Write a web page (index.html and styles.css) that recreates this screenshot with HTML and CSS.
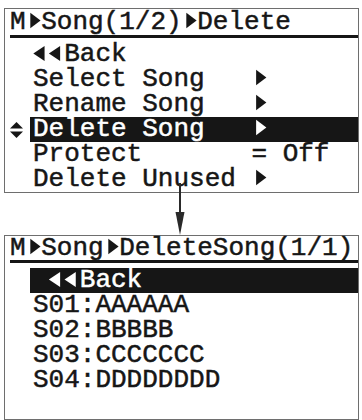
FILE: index.html
```html
<!DOCTYPE html>
<html lang="en">
<head>
<meta charset="utf-8">
<title>Delete Song</title>
<link rel="stylesheet" href="styles.css">
</head>
<body>
<div class="screen">
  <section class="panel panel-top">
    <div class="title">M<span class="tri tri-r"></span>Song(1/2)<span class="tri tri-r"></span>Delete</div>
    <ul class="menu">
      <li class="row"><span class="mark"></span><span class="txt"><span class="tri tri-l"></span><span class="tri tri-l"></span>Back</span></li>
      <li class="row"><span class="mark"></span><span class="txt"><span class="lbl">Select Song</span><span class="tri tri-r"></span></span></li>
      <li class="row"><span class="mark"></span><span class="txt"><span class="lbl">Rename Song</span><span class="tri tri-r"></span></span></li>
      <li class="row sel"><span class="mark"><svg class="updown" width="13" height="16" viewBox="0 0 13 16"><polygon points="6.5,0 13,6.5 0,6.5"/><polygon points="0,9.5 13,9.5 6.5,16"/></svg></span><span class="txt"><span class="lbl">Delete Song</span><span class="tri tri-r"></span></span></li>
      <li class="row"><span class="mark"></span><span class="txt"><span class="lbl">Protect</span><span class="val">= Off</span></span></li>
      <li class="row"><span class="mark"></span><span class="txt"><span class="lbl">Delete Unused</span><span class="tri tri-r"></span></span></li>
    </ul>
  </section>
  <div class="connector">
    <svg class="arrow" width="20" height="52" viewBox="0 0 20 52"><line x1="10" y1="0" x2="10" y2="32" stroke="#2a2a2a" stroke-width="2"/><polygon points="5.5,29 14.5,29 10,52" fill="#2a2a2a"/></svg>
  </div>
  <section class="panel panel-bottom">
    <div class="title">M<span class="tri tri-r"></span>Song<span class="tri tri-r"></span>DeleteSong(1/1)</div>
    <ul class="menu">
      <li class="row sel"><span class="mark"></span><span class="txt"><span class="pad"></span><span class="tri tri-l"></span><span class="tri tri-l"></span>Back</span></li>
      <li class="row"><span class="mark"></span><span class="txt">S01:AAAAAA</span></li>
      <li class="row"><span class="mark"></span><span class="txt">S02:BBBBB</span></li>
      <li class="row"><span class="mark"></span><span class="txt">S03:CCCCCCC</span></li>
      <li class="row"><span class="mark"></span><span class="txt">S04:DDDDDDDD</span></li>
    </ul>
  </section>
</div>
</body>
</html>
```

FILE: styles.css
```css
* {
  box-sizing: border-box;
  margin: 0;
  padding: 0;
}

html,
body {
  background: #ffffff;
}

body {
  width: 362px;
  height: 420px;
  overflow: hidden;
  font-family: "Liberation Mono", "DejaVu Sans Mono", monospace;
  font-size: 26px;
  color: #161616;
  -webkit-text-stroke: 0.5px currentColor;
}

.screen {
  display: flex;
  flex-direction: column;
  padding: 8px 3px 0 4px;
}

.panel {
  border: 1px solid #6e6e6e;
  padding-left: 5px;
}

.panel-top {
  height: 185px;
}

.panel-bottom {
  height: 185px;
}

.title {
  height: 29px;
  line-height: 26px;
  border-bottom: 3px solid #161616;
  white-space: pre;
}

.panel-top .menu {
  margin-top: 4px;
}

.panel-bottom .title {
  height: 27px;
  line-height: 24px;
}

.menu {
  list-style: none;
  margin-top: 5px;
}

.row {
  display: flex;
  height: 25px;
  line-height: 25px;
}

.mark {
  flex: none;
  width: 20px;
  display: flex;
  align-items: center;
}

.txt {
  flex: 1;
  padding-left: 3px;
  white-space: pre;
}

.lbl {
  display: inline-block;
  width: 14ch;
}

.val {
  display: inline-block;
}

.pad {
  display: inline-block;
  width: 1ch;
}

.sel .txt {
  background: #161616;
  color: #ffffff;
}

.updown {
  display: block;
  fill: #161616;
}

.tri {
  display: inline-block;
  width: 1ch;
  height: 17px;
  background: currentColor;
}

.tri-r {
  clip-path: polygon(30% 4%, 96% 50%, 30% 96%);
}

.tri-l {
  height: 15px;
  clip-path: polygon(74% 0, 2% 50%, 74% 100%);
}

.connector {
  height: 42px;
  padding-left: 166px;
}

.arrow {
  display: block;
  margin-top: -10px;
}
```
